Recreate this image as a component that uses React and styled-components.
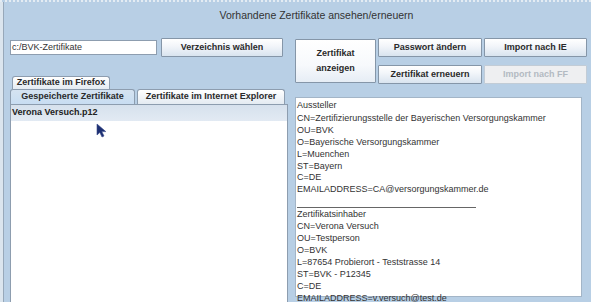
import React from 'react';
import styled, { createGlobalStyle, css } from 'styled-components';

const GlobalStyle = createGlobalStyle`
  html, body {
    margin: 0;
    padding: 0;
    background: #b8cfe5;
  }
  body {
    font-family: 'Liberation Sans', Arial, sans-serif;
  }
`;

const Window = styled.div`
  width: 591px;
  height: 302px;
  overflow: hidden;
  box-sizing: border-box;
  background: #b8cfe5;
  border-top: 2px dotted #e4ecf3;
  box-shadow: inset 3px 0 0 #dbe5ee, inset 4px 0 0 #97a8b9;
  color: #333;
`;

const Title = styled.div`
  height: 36px;
  box-sizing: border-box;
  padding: 7px 0 0 42px;
  text-align: center;
  font-size: 10.5px;
  color: #333;
`;

const Body = styled.div`
  display: grid;
  grid-template-columns: 278px 296px;
  column-gap: 7px;
  padding-left: 10px;
`;

const Column = styled.div`
  display: flex;
  flex-direction: column;
`;

const PathRow = styled.div`
  display: flex;
  align-items: center;
  gap: 4px;
  height: 19px;
`;

const PathField = styled.div`
  width: 147px;
  height: 15px;
  box-sizing: border-box;
  border: 1px solid #8d9daf;
  background: #fff;
  font-size: 9px;
  line-height: 13px;
  padding-left: 1px;
  color: #333;
`;

const Button = styled.button`
  width: ${(p) => p.$w || 104}px;
  height: ${(p) => p.$h || 19}px;
  box-sizing: border-box;
  margin: 0;
  padding: 0;
  border: 1px solid #8596a8;
  border-radius: 1px;
  background: linear-gradient(#ffffff 0%, #f3f6fa 40%, #d9e4ef 100%);
  font-family: 'Liberation Sans', Arial, sans-serif;
  font-weight: bold;
  font-size: 9px;
  color: #2a2a2a;
  line-height: 15px;
  ${(p) =>
    p.$tall &&
    css`
      grid-row: span 2;
      height: 44px;
      align-self: start;
      margin-top: 1px;
      background: linear-gradient(#ffffff 0%, #f7f9fc 60%, #e6edf5 100%);
    `}
  ${(p) =>
    p.disabled &&
    css`
      background: #eeeff1;
      border-color: #c2ccd6;
      color: #b3bac2;
    `}
`;

const Tabs = styled.div`
  margin-top: 19px;
  display: flex;
  flex-direction: column;
`;

const TabRow = styled.div`
  display: flex;
  gap: 2px;
  padding-left: ${(p) => p.$indent || 0}px;
`;

const Tab = styled.div`
  width: ${(p) => p.$w}px;
  height: ${(p) => p.$h || 15}px;
  box-sizing: border-box;
  border: 1px solid #8d9daf;
  border-bottom: none;
  border-radius: 3px 3px 0 0;
  background: ${(p) =>
    p.$selected
      ? 'linear-gradient(#d5e3f1, #c8ddf2)'
      : 'linear-gradient(#ffffff, #e4ebf2)'};
  font-weight: bold;
  font-size: 9px;
  line-height: ${(p) => (p.$h || 15) - 2}px;
  text-align: center;
  color: #2a2a2a;
`;

const ListPanel = styled.div`
  position: relative;
  height: 200px;
  box-sizing: border-box;
  border: 1px solid #8d9daf;
  background: #fff;
`;

const ListItem = styled.div`
  height: 16px;
  padding-left: 1px;
  font-weight: bold;
  font-size: 9px;
  line-height: 15px;
  color: #222;
  background: ${(p) => (p.$selected ? 'linear-gradient(#d6e1ed, #e2eaf3)' : 'transparent')};
`;

const Pointer = styled.svg`
  position: absolute;
  left: 85px;
  top: 18px;
`;

const ButtonGrid = styled.div`
  display: grid;
  grid-template-columns: 81px 104px 103px;
  grid-template-rows: 19px 19px;
  column-gap: 2px;
  row-gap: 8px;
`;

const Details = styled.div`
  margin-top: 13px;
  width: 287px;
  height: 200px;
  box-sizing: border-box;
  border: 1px solid #a3b5c7;
  background: #fff;
  padding: 2px 0 0 1px;
  font-size: 9px;
  line-height: 11.9px;
  color: #333;
`;

const Line = styled.div`
  white-space: nowrap;
  margin-bottom: ${(p) => p.$gap || 0}px;
`;

const Rule = styled.div`
  width: 179px;
  height: 12px;
  box-sizing: border-box;
  border-bottom: 1px solid #666;
  margin-bottom: 1px;
`;

const issuer = [
  'CN=Zertifizierungsstelle der Bayerischen Versorgungskammer',
  'OU=BVK',
  'O=Bayerische Versorgungskammer',
  'L=Muenchen',
  'ST=Bayern',
  'C=DE',
  'EMAILADDRESS=CA@versorgungskammer.de',
];

const holder = [
  'CN=Verona Versuch',
  'OU=Testperson',
  'O=BVK',
  'L=87654 Probierort - Teststrasse 14',
  'ST=BVK - P12345',
  'C=DE',
  'EMAILADDRESS=v.versuch@test.de',
];

function App() {
  return (
    <Window>
      <GlobalStyle />
      <Title>Vorhandene Zertifikate ansehen/erneuern</Title>
      <Body>
        <Column>
          <PathRow>
            <PathField>c:/BVK-Zertifikate</PathField>
            <Button $w={122}>Verzeichnis wählen</Button>
          </PathRow>
          <Tabs>
            <TabRow $indent={2}>
              <Tab $w={98} $h={13}>Zertifikate im Firefox</Tab>
            </TabRow>
            <TabRow>
              <Tab $w={125} $selected>Gespeicherte Zertifikate</Tab>
              <Tab $w={148}>Zertifikate im Internet Explorer</Tab>
            </TabRow>
          </Tabs>
          <ListPanel>
            <ListItem $selected>Verona Versuch.p12</ListItem>
            <Pointer width="12" height="15" viewBox="0 0 12 15">
              <path d="M1 1 L1 12 L3.8 9.4 L6 14 L8 13 L5.8 8.6 L9.8 8.6 Z" fill="#1d2f72" stroke="#3a4c8c" strokeWidth="0.6" />
            </Pointer>
          </ListPanel>
        </Column>
        <Column>
          <ButtonGrid>
            <Button $tall $w={81}>
              Zertifikat
              <br />
              anzeigen
            </Button>
            <Button $w={104}>Passwort ändern</Button>
            <Button $w={103}>Import nach IE</Button>
            <Button $w={104}>Zertifikat erneuern</Button>
            <Button $w={103} disabled>
              Import nach FF
            </Button>
          </ButtonGrid>
          <Details>
            <Line $gap={1}>Aussteller</Line>
            {issuer.map((t) => (
              <Line key={t}>{t}</Line>
            ))}
            <Rule />
            <Line>Zertifikatsinhaber</Line>
            {holder.map((t) => (
              <Line key={t}>{t}</Line>
            ))}
          </Details>
        </Column>
      </Body>
    </Window>
  );
}

export default App;
